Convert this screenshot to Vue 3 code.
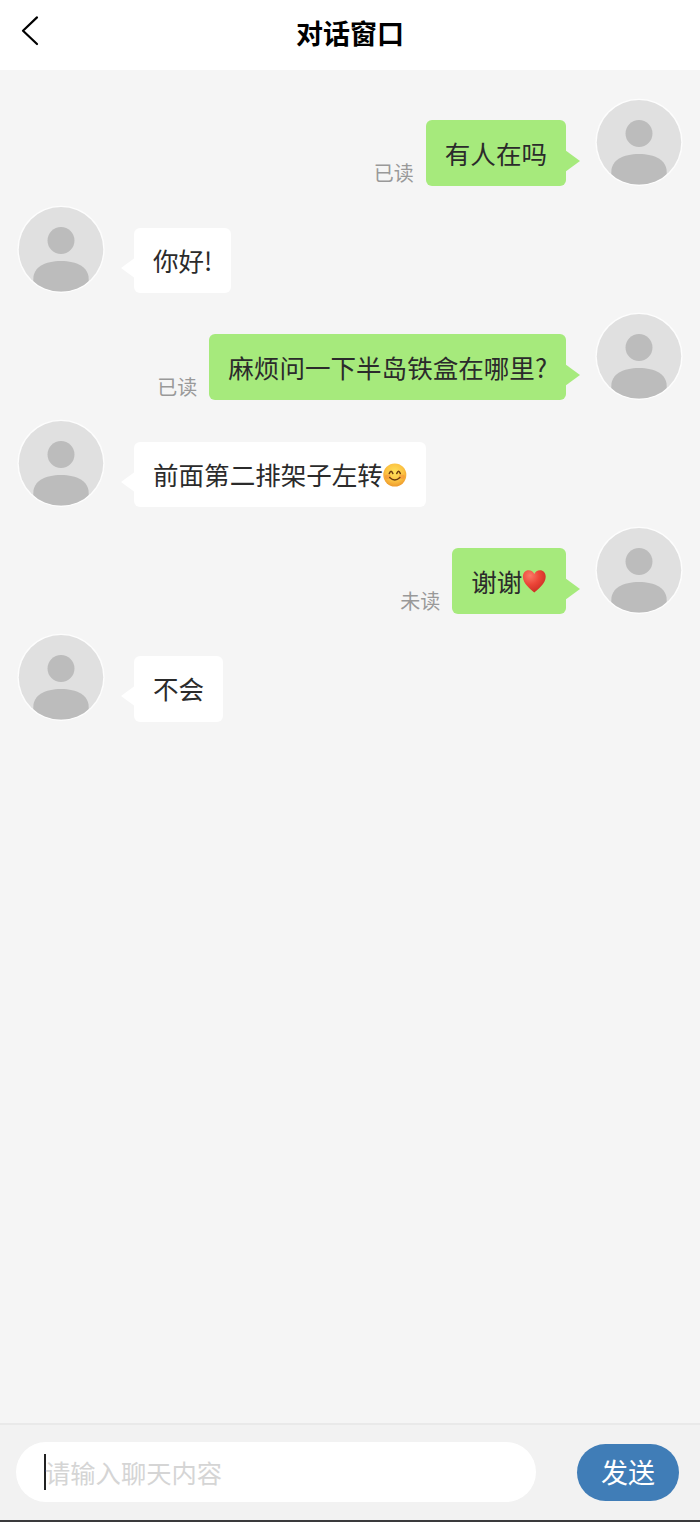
<script setup>
const messages = [
  { mine: true, text: '有人在吗', status: '已读' },
  { mine: false, text: '你好!' },
  { mine: true, text: '麻烦问一下半岛铁盒在哪里?', status: '已读' },
  { mine: false, text: '前面第二排架子左转', icon: 'smile' },
  { mine: true, text: '谢谢', icon: 'heart', status: '未读' },
  { mine: false, text: '不会' },
]
</script>

<template>
  <div class="chat">
    <header class="header">
      <svg class="back" viewBox="0 0 20 32" fill="none" stroke="#000" stroke-width="2.2" stroke-linecap="round" stroke-linejoin="round">
        <path d="M17 2.4 L3 15.7 L17 29" />
      </svg>
      <h1 class="title">对话窗口</h1>
    </header>

    <main class="messages">
      <div v-for="(m, i) in messages" :key="i" class="row" :class="{ mine: m.mine }">
        <svg class="avatar" viewBox="0 0 88 88">
          <defs>
            <clipPath :id="'face' + i"><circle cx="44" cy="44.3" r="42.3" /></clipPath>
          </defs>
          <circle cx="44" cy="44.3" r="43.6" fill="#fdfdfd" />
          <circle cx="44" cy="44.3" r="42.2" fill="#e0e0e0" />
          <g fill="#bcbcbc" :clip-path="'url(#face' + i + ')'">
            <circle cx="44" cy="35.5" r="13.5" />
            <path d="M16.3 74 C16.3 62 28 56 44 56 C60 56 71.7 62 71.7 74 V88 H16.3 Z" />
          </g>
        </svg>
        <div class="bubble">
          <span>{{ m.text }}</span>
          <svg v-if="m.icon === 'smile'" class="emoji" viewBox="0 0 25 26">
            <defs>
              <radialGradient id="skin" cx="50%" cy="38%" r="62%">
                <stop offset="0" stop-color="#ffe25a" />
                <stop offset=".6" stop-color="#fcc444" />
                <stop offset="1" stop-color="#ee9a2c" />
              </radialGradient>
            </defs>
            <circle cx="12" cy="13" r="11.7" fill="url(#skin)" />
            <ellipse cx="5" cy="14.8" rx="3" ry="2.3" fill="#f58238" opacity=".45" />
            <ellipse cx="19" cy="14.8" rx="3" ry="2.3" fill="#f58238" opacity=".45" />
            <g fill="none" stroke="#6d3d10" stroke-linecap="round" stroke-linejoin="round">
              <path d="M6.4 11.4 Q8.2 6.8 10 11.4 M14 11.4 Q15.8 6.8 17.6 11.4" stroke-width="1.6" />
              <path d="M6.8 15.6 Q12 20.6 17.2 15.6" stroke-width="1.4" />
            </g>
          </svg>
          <svg v-if="m.icon === 'heart'" class="emoji" viewBox="0 0 25 26">
            <defs>
              <radialGradient id="red" cx="32%" cy="24%" r="80%">
                <stop offset="0" stop-color="#fb7967" />
                <stop offset=".5" stop-color="#ec4638" />
                <stop offset="1" stop-color="#c92c23" />
              </radialGradient>
            </defs>
            <path d="M12.5 24.8 C9 21.5 .9 15.8 .9 8.7 C.9 4.6 3.5 2 6.7 2 C9.5 2 11.5 3.6 12.5 6 C13.5 3.6 15.5 2 18.3 2 C21.5 2 24.1 4.6 24.1 8.7 C24.1 15.8 16 21.5 12.5 24.8 Z" fill="url(#red)" />
          </svg>
          <svg class="tail" viewBox="0 0 15 22"><path d="M0 0 L15 11 L0 22 Z" fill="currentColor" /></svg>
        </div>
        <span v-if="m.status" class="status">{{ m.status }}</span>
      </div>
    </main>

    <footer class="footer">
      <div class="field">
        <i class="caret"></i>
        <span class="placeholder">请输入聊天内容</span>
      </div>
      <button class="send">发送</button>
    </footer>
  </div>
</template>

<style>
body {
  margin: 0;
}
</style>

<style scoped>
.chat {
  display: flex;
  flex-direction: column;
  box-sizing: border-box;
  width: 700px;
  height: 1522px;
  background: #f5f5f5;
  border-bottom: 2px solid #3a3a3c;
  font-family: "Noto Sans CJK SC", sans-serif;
  overflow: hidden;
}
.header {
  display: grid;
  grid-template-columns: 60px 1fr 60px;
  align-items: center;
  height: 70px;
  background: #fff;
}
.back {
  width: 20px;
  height: 32px;
  margin: -8px 0 0 20px;
}
.title {
  margin: -5px 0 0;
  text-align: center;
  font-size: 27px;
  line-height: 40px;
  font-weight: 700;
  color: #000;
}
.messages {
  flex: 1;
  padding: 28px 17px 0;
}
.row {
  display: flex;
  align-items: flex-start;
  height: 107.1px;
}
.mine {
  flex-direction: row-reverse;
}
.avatar {
  width: 88px;
  height: 88px;
  flex: none;
}
.bubble {
  position: relative;
  display: flex;
  align-items: center;
  box-sizing: border-box;
  height: 65.6px;
  margin: 22.5px 0 0 29px;
  padding: 0 18.8px 0 19px;
  border-radius: 6px;
  background: #fff;
  color: #2b2b2b;
  font-size: 25.56px;
  line-height: 38px;
  white-space: nowrap;
}
.bubble span {
  margin-top: -1px;
}
.mine .bubble {
  height: 66px;
  margin: 22px 29px 0 0;
  padding: 0 19px;
  background: #a6ea7c;
}
.tail {
  position: absolute;
  top: 29.5px;
  left: -13px;
  width: 15px;
  height: 22px;
  color: #fff;
  transform: scaleX(-1);
}
.mine .tail {
  top: 30px;
  left: auto;
  right: -14px;
  color: #a6ea7c;
  transform: none;
}
.emoji {
  width: 24.6px;
  height: 26px;
}
.status {
  margin: 60px 12px 0 0;
  font-size: 20px;
  line-height: 30px;
  color: #999;
}
.footer {
  display: flex;
  align-items: center;
  justify-content: space-between;
  box-sizing: border-box;
  height: 97px;
  padding: 0 21px 1px 16px;
  border-top: 2px solid #e9e9e9;
  background: #f2f2f2;
}
.field {
  display: flex;
  align-items: center;
  box-sizing: border-box;
  width: 520px;
  height: 60px;
  padding-left: 28px;
  border-radius: 30px;
  background: #fff;
  color: #d5d5d5;
  font-size: 25.3px;
}
.placeholder {
  margin-top: -1px;
}
.caret {
  width: 2px;
  height: 36px;
  margin-right: -1px;
  background: #222;
}
.send {
  width: 102px;
  height: 57px;
  padding: 0;
  border: 0;
  border-radius: 29px;
  background: #407db7;
  color: #fff;
  font: 400 27px/40px "Noto Sans CJK SC", sans-serif;
}
</style>
